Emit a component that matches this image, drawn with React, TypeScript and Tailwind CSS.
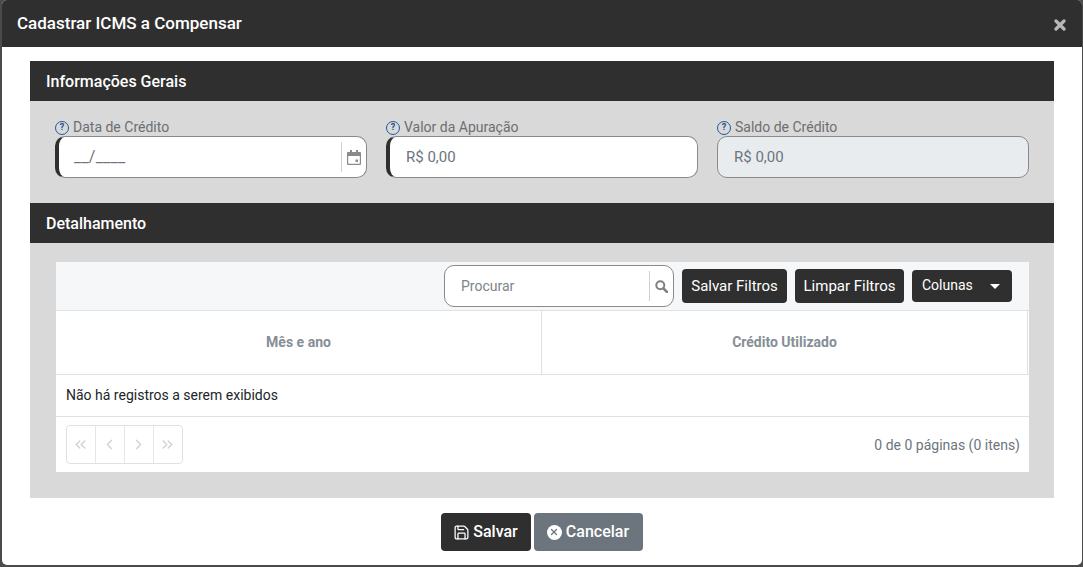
import { ChevronLeft, ChevronRight, ChevronsLeft, ChevronsRight, Save, X } from 'lucide-react';

const roboto = { fontFamily: 'Roboto, sans-serif' };

function HelpIcon() {
  return (
    <span className="flex h-[14px] w-[14px] shrink-0 items-center justify-center rounded-full border-[1.5px] border-[#1f5a9c] text-[9px] font-bold leading-none text-[#1f4f86]">
      ?
    </span>
  );
}

function FieldLabel({ text }: { text: string }) {
  return (
    <div className="flex h-[18px] items-center gap-[4px] pt-[1px]">
      <HelpIcon />
      <span className="-mt-[2px] text-sm leading-[18px] text-[#6c6f72]">{text}</span>
    </div>
  );
}

function SectionTitle({ text }: { text: string }) {
  return (
    <div className="flex h-10 items-center bg-[#2f2f2f] pl-4 pt-[2px] text-base font-medium text-white">{text}</div>
  );
}

function PagerButton({ children, last }: { children: React.ReactNode; last?: boolean }) {
  return (
    <div className={`flex h-full items-center justify-center pr-[1px] text-[#d0d2d4] ${last ? 'w-[28px]' : 'w-[29px] border-r border-[#e6e6e6]'}`}>
      {children}
    </div>
  );
}

function CalendarIcon() {
  return (
    <svg width="14" height="15" viewBox="0 0 14 15" className="text-[#8a8a8a]">
      <path fill="currentColor" d="M3 0h2v2h4V0h2v2h2a1 1 0 0 1 1 1v11a1 1 0 0 1-1 1H1a1 1 0 0 1-1-1V3a1 1 0 0 1 1-1h2V0zM1.2 6v7.8h11.6V6H1.2z" />
      <rect x="8.5" y="9.5" width="2.5" height="2.5" fill="currentColor" />
    </svg>
  );
}

function SearchIcon() {
  return (
    <svg width="13" height="13" viewBox="0 0 13 13" fill="none" stroke="#808080">
      <circle cx="5.3" cy="5.3" r="4" strokeWidth="2" />
      <path d="M8.4 8.4L12 12" strokeWidth="2.6" strokeLinecap="round" />
    </svg>
  );
}

function CloseIcon() {
  return (
    <svg width="12" height="12" viewBox="0 0 12 12" className="mr-[1px] mt-[3px]">
      <path d="M2 2l8 8M10 2l-8 8" stroke="#b8b8b8" strokeWidth="3.2" strokeLinecap="round" />
    </svg>
  );
}

export default function App() {
  return (
    <div style={roboto} className="h-[567px] w-[1083px] overflow-hidden bg-[#4b4b4b] pl-[2px]">
      <div className="flex h-[565px] w-[1080px] flex-col overflow-hidden rounded-[5px] bg-white">
        <div className="flex h-[47px] shrink-0 items-center justify-between bg-[#2f2f2f] pl-[15px] pr-[15px]">
          <span className="text-[17px] font-medium text-white">Cadastrar ICMS a Compensar</span>
          <CloseIcon />
        </div>

        <div className="flex flex-col pl-[28px] pr-[28px] pt-[14px]">
          <SectionTitle text="Informações Gerais" />
          <div className="flex h-[102px] gap-[19px] bg-[#d9d9d9] pl-[25px] pt-[17px]">
            <div className="w-[312px]">
              <FieldLabel text="Data de Crédito" />
              <div className="flex h-[42px] items-center rounded-[10px] border border-[#8a8a8a] border-l-[4px] border-l-[#2f2f2f] bg-white">
                <span className="ml-[15px] flex-1 text-[16px] tracking-[0.2px] text-[#6c757d]">__/____</span>
                <div className="flex h-[30px] w-[25px] items-center justify-center border-l border-[#d0d0d0]">
                  <CalendarIcon />
                </div>
              </div>
            </div>
            <div className="w-[312px]">
              <FieldLabel text="Valor da Apuração" />
              <div className="flex h-[42px] items-center rounded-[10px] border border-[#8a8a8a] border-l-[4px] border-l-[#2f2f2f] bg-white pl-[16px] text-[15px] text-[#6c757d]">
                R$ 0,00
              </div>
            </div>
            <div className="w-[312px]">
              <FieldLabel text="Saldo de Crédito" />
              <div className="flex h-[42px] items-center rounded-[10px] border border-[#8a8a8a] bg-[#e9ecef] pl-[16px] text-[15px] text-[#6c757d]">
                R$ 0,00
              </div>
            </div>
          </div>

          <SectionTitle text="Detalhamento" />
          <div className="h-[255px] bg-[#d9d9d9] pl-[26px] pt-[19px]">
            <div className="h-[210px] w-[973px] bg-white text-sm">
              <div className="flex h-[49px] items-center border-b border-[#dee2e6] bg-[#f6f7f9] pl-[388px]">
                <div className="flex h-[42px] w-[230px] items-center rounded-[10px] border border-[#8a8a8a] bg-white">
                  <span className="ml-4 flex-1 text-[#7d8389]">Procurar</span>
                  <div className="flex h-[30px] w-[24px] items-center justify-center border-l border-[#d0d0d0]">
                    <SearchIcon />
                  </div>
                </div>
                <div className="ml-2 flex h-[34px] w-[105px] items-center justify-center rounded-[4px] bg-[#2f2f2f] pt-[2px] text-[15px] text-white">Salvar Filtros</div>
                <div className="ml-2 flex h-[34px] w-[109px] items-center justify-center rounded-[4px] bg-[#2f2f2f] pt-[2px] text-[15px] text-white">Limpar Filtros</div>
                <div className="ml-2 flex h-[32px] w-[100px] items-center rounded-[4px] bg-[#2f2f2f] pl-[10px] text-white">
                  <span className="-mt-[2px] flex-1 text-sm">Colunas</span>
                  <span className="mr-[12px] h-0 w-0 border-x-[5px] border-t-[5px] border-x-transparent border-t-white" />
                </div>
              </div>
              <div className="flex h-[64px] border-b border-[#dee2e6] font-bold text-[#868e96]">
                <div className="flex w-[486px] items-center justify-center border-r border-[#dee2e6] pb-[2px]">Mês e ano</div>
                <div className="flex w-[486px] items-center justify-center border-r border-[#dee2e6] pb-[2px]">Crédito Utilizado</div>
              </div>
              <div className="flex h-[42px] items-center border-b border-[#dee2e6] pb-[2px] pl-[10px] text-[#212529]">
                Não há registros a serem exibidos
              </div>
              <div className="flex h-[54px] items-center justify-between pl-[10px] pr-[9px]">
                <div className="flex h-[39px] items-center rounded-[4px] border border-[#dee2e6]">
                  <PagerButton><ChevronsLeft size={17} /></PagerButton>
                  <PagerButton><ChevronLeft size={17} /></PagerButton>
                  <PagerButton><ChevronRight size={17} /></PagerButton>
                  <PagerButton last><ChevronsRight size={17} /></PagerButton>
                </div>
                <span className="pt-[2px] text-[#6c757d]">0 de 0 páginas (0 itens)</span>
              </div>
            </div>
          </div>
        </div>

        <div className="flex justify-center gap-[3px] pr-[1px] pt-[15px]">
          <div className="flex h-[38px] w-[90px] items-center justify-center gap-[3px] rounded-[4px] bg-[#2f2f2f] text-base font-medium text-white">
            <Save size={17} strokeWidth={1.8} />
            Salvar
          </div>
          <div className="flex h-[38px] w-[109px] items-center justify-center gap-[4px] rounded-[4px] bg-[#6c757d] text-base font-medium text-white">
            <span className="flex h-[15px] w-[15px] items-center justify-center rounded-full bg-white">
              <X size={10} strokeWidth={3} className="text-[#6c757d]" />
            </span>
            Cancelar
          </div>
        </div>
      </div>
    </div>
  );
}
